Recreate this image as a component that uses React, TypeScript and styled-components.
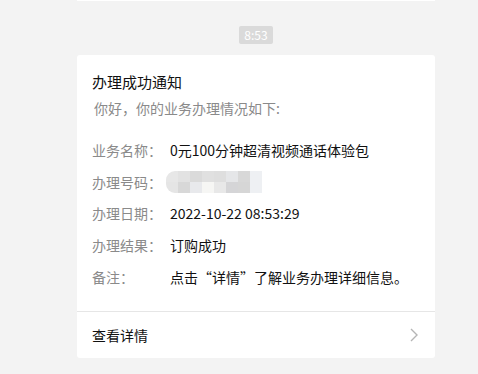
import React from "react";
import styled, { createGlobalStyle } from "styled-components";

const Global = createGlobalStyle`
  html, body { margin: 0; padding: 0; }
  body {
    background: #f3f3f3;
    font-family: "Microsoft YaHei", "Noto Sans CJK SC", "Noto Sans", sans-serif;
    -webkit-font-smoothing: antialiased;
  }
`;

const Page = styled.div`
  width: 478px;
  height: 374px;
  overflow: hidden;
  box-sizing: border-box;
  padding-left: 77px;
  display: flex;
  flex-direction: column;
  align-items: flex-start;
`;

const PrevCard = styled.div`
  width: 358px;
  height: 1px;
  background: #ffffff;
`;

const TimeRow = styled.div`
  width: 358px;
  display: flex;
  justify-content: center;
  margin-top: 25px;
`;

const TimeBadge = styled.div`
  height: 18px;
  padding: 0 5px;
  border-radius: 2px;
  background: #dadada;
  color: #ffffff;
  font-size: 12px;
  line-height: 18px;
`;

const Card = styled.div`
  width: 358px;
  margin-top: 11px;
  background: #ffffff;
  border-radius: 3px;
  display: flex;
  flex-direction: column;
`;

const Body = styled.div`
  padding: 16px 15px 18.5px 15px;
  display: flex;
  flex-direction: column;
`;

const Title = styled.div`
  font-size: 15px;
  line-height: 22px;
  color: #111111;
`;

const Subtitle = styled.div`
  margin-top: 5px;
  padding-left: 2px;
  font-size: 14px;
  line-height: 20px;
  color: #8a8a8a;
`;

const Fields = styled.div`
  margin-top: 16px;
  display: flex;
  flex-direction: column;
`;

const Row = styled.div`
  display: flex;
  align-items: center;
  height: 31.8px;
  font-size: 14px;
`;

const Label = styled.div`
  width: 78px;
  flex: none;
  color: #8a8a8a;
`;

const Value = styled.div`
  color: #111111;
  white-space: nowrap;
`;

const Mosaic = styled.div`
  display: grid;
  grid-template-columns: repeat(8, 12px);
  grid-template-rows: repeat(2, 11px);
  margin-left: -4px;
  border-radius: 9px 0 0 9px;
  overflow: hidden;
  filter: blur(0.6px);
`;

const Tile = styled.div<{ $c: string }>`
  background: ${(p) => p.$c};
`;

const Divider = styled.div`
  height: 1px;
  background: #e6e6e6;
`;

const Footer = styled.div`
  height: 46px;
  padding: 0 15px;
  display: flex;
  align-items: center;
  justify-content: space-between;
  font-size: 14px;
  color: #111111;
`;

const Chevron = styled.svg`
  width: 8px;
  height: 14px;
  margin-right: 2px;
`;

const tiles = [
  "#e7e7e7", "#e2e2e2", "#dadada", "#e0e0e0", "#dedede", "#e5e6e8", "#d8d8d8", "#eef0f3",
  "#e5e5e5", "#d8d8d8", "#e8e9ec", "#f6f6f4", "#e8e8e8", "#d5d5d7", "#d6d6d6", "#eef0f3",
];

const rows: { label: string; value?: string; mosaic?: boolean }[] = [
  { label: "业务名称：", value: "0元100分钟超清视频通话体验包" },
  { label: "办理号码：", mosaic: true },
  { label: "办理日期：", value: "2022-10-22 08:53:29" },
  { label: "办理结果：", value: "订购成功" },
  { label: "备注：", value: "点击“详情”了解业务办理详细信息。" },
];

export default function App() {
  return (
    <>
      <Global />
      <Page>
        <PrevCard />
        <TimeRow>
          <TimeBadge>8:53</TimeBadge>
        </TimeRow>
        <Card>
          <Body>
            <Title>办理成功通知</Title>
            <Subtitle>你好，你的业务办理情况如下:</Subtitle>
            <Fields>
              {rows.map((r) => (
                <Row key={r.label}>
                  <Label>{r.label}</Label>
                  {r.mosaic ? (
                    <Mosaic>
                      {tiles.map((c, i) => (
                        <Tile key={i} $c={c} />
                      ))}
                    </Mosaic>
                  ) : (
                    <Value>{r.value}</Value>
                  )}
                </Row>
              ))}
            </Fields>
          </Body>
          <Divider />
          <Footer>
            <span>查看详情</span>
            <Chevron viewBox="0 0 8 14">
              <polyline points="1,1 7,7 1,13" fill="none" stroke="#b5b5b5" strokeWidth="1.4" />
            </Chevron>
          </Footer>
        </Card>
      </Page>
    </>
  );
}
